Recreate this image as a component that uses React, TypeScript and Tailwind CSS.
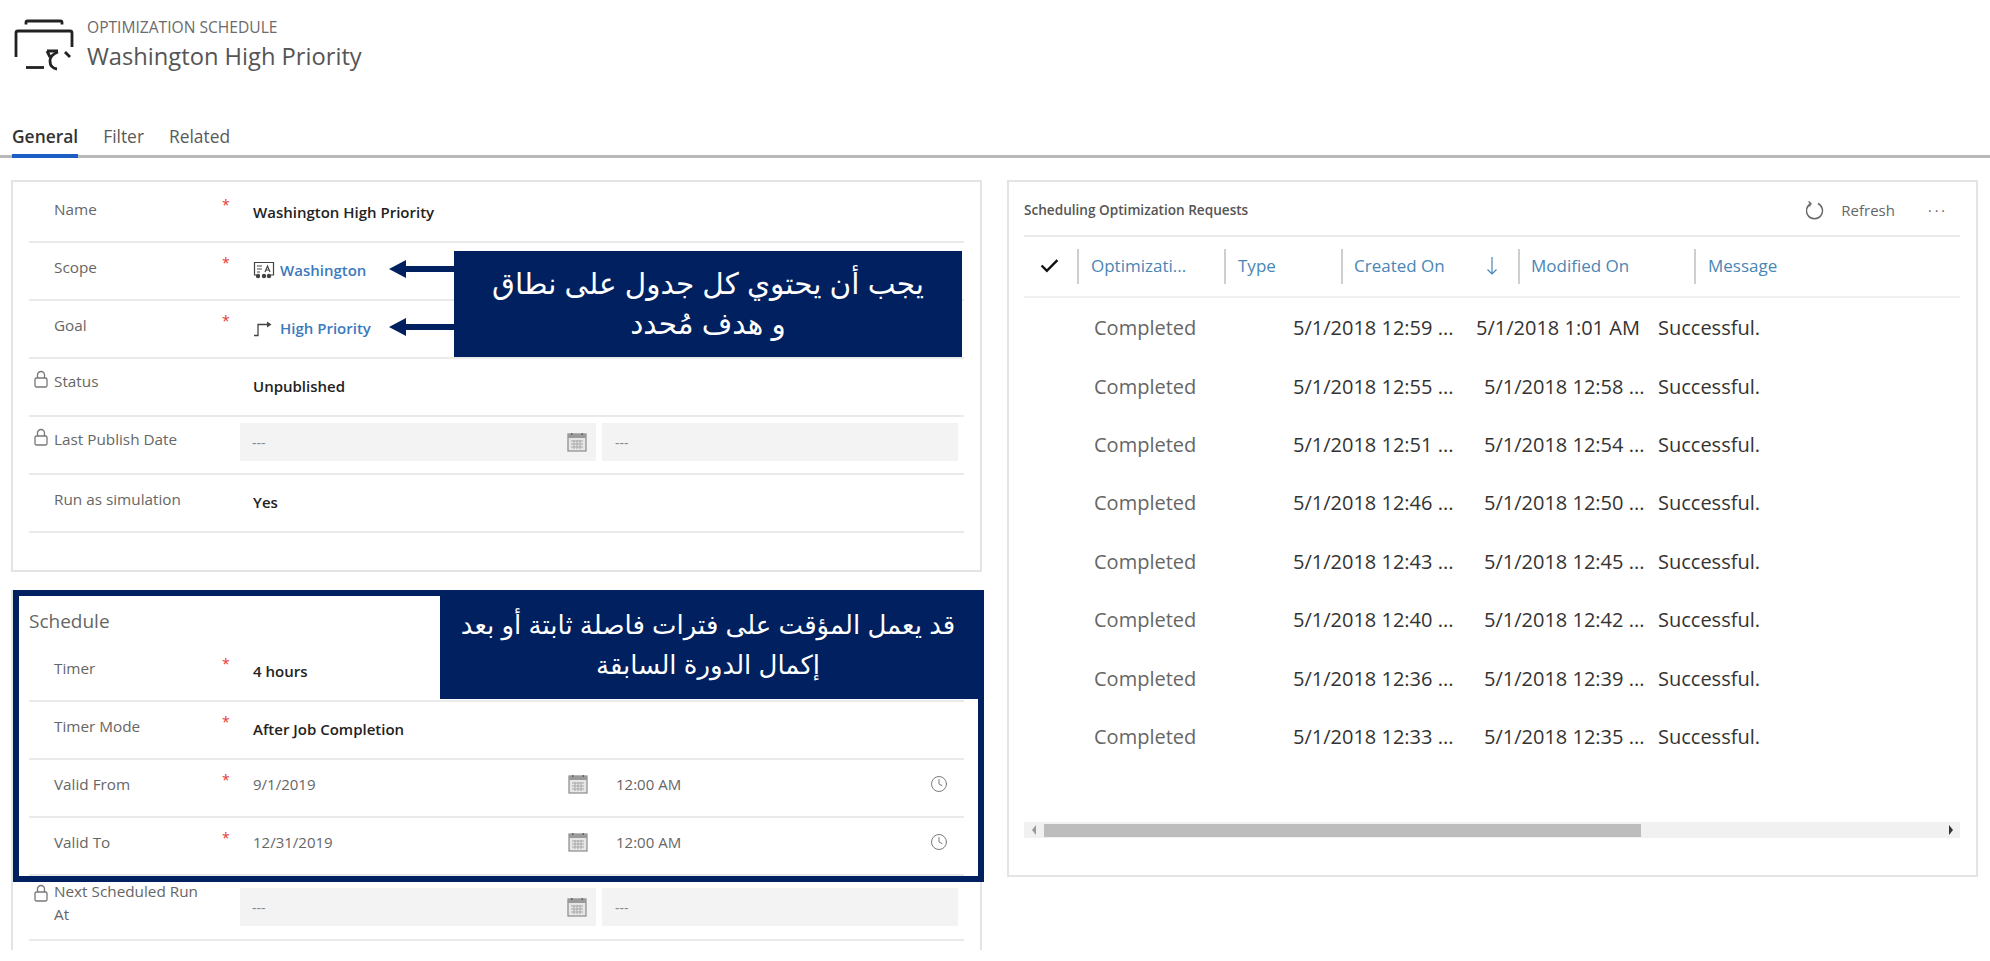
import React from 'react';
import { Clock } from 'lucide-react';

const uiFont = { fontFamily: '"Open Sans", "Noto Sans", sans-serif' };
const calloutFont = { fontFamily: '"Liberation Sans", "Noto Sans", "DejaVu Sans", sans-serif' };

const requests = [
  { created: '5/1/2018 12:59 ...', modified: '5/1/2018 1:01 AM' },
  { created: '5/1/2018 12:55 ...', modified: '5/1/2018 12:58 ...' },
  { created: '5/1/2018 12:51 ...', modified: '5/1/2018 12:54 ...' },
  { created: '5/1/2018 12:46 ...', modified: '5/1/2018 12:50 ...' },
  { created: '5/1/2018 12:43 ...', modified: '5/1/2018 12:45 ...' },
  { created: '5/1/2018 12:40 ...', modified: '5/1/2018 12:42 ...' },
  { created: '5/1/2018 12:36 ...', modified: '5/1/2018 12:39 ...' },
  { created: '5/1/2018 12:33 ...', modified: '5/1/2018 12:35 ...' },
];

function LockIcon({ top }: { top: string }) {
  return (
    <svg width="14" height="18" viewBox="0 0 14 18" fill="none" stroke="#777" strokeWidth="1.3" className={`absolute left-[5px] ${top}`}>
      <rect x="1" y="8" width="12" height="9" rx="1.5" />
      <path d="M3.5 8V5a3.5 3.5 0 0 1 7 0v3" />
    </svg>
  );
}

function CalendarIcon() {
  return (
    <svg width="20" height="20" viewBox="0 0 20 20" className="shrink-0">
      <rect x="1" y="2" width="18" height="17" fill="#e6e6e6" stroke="#8a8a8a" strokeWidth="1.2" />
      <rect x="1" y="2" width="18" height="4" fill="#9a9a9a" />
      <rect x="4" y="1" width="1.5" height="2" fill="#666" />
      <rect x="14.5" y="1" width="1.5" height="2" fill="#666" />
      <path d="M4 9h12M4 12h12M4 15h12M7 8v9M10 8v9M13 8v9" stroke="#a8a8a8" strokeWidth="1" />
    </svg>
  );
}

function ScopeIcon() {
  return (
    <svg width="22" height="18" viewBox="0 0 22 18" fill="none" stroke="#444" strokeWidth="1.2" className="mr-[5px] shrink-0">
      <path d="M3 14H1.5V1.5h19V14H18" />
      <path d="M4 5h5M4 8h5M4 11h3" />
      <path d="M12 11l2.5-6 2.5 6M13 9h3" />
      <circle cx="5" cy="15" r="1.6" fill="#444" />
      <circle cx="11" cy="15" r="1.6" fill="#444" />
      <circle cx="16" cy="15" r="1.6" fill="#444" />
    </svg>
  );
}

function GoalIcon() {
  return (
    <svg width="20" height="18" viewBox="0 0 20 18" fill="none" stroke="#444" strokeWidth="1.3" className="mr-[7px] shrink-0">
      <path d="M1 16.5h4V5.5h9" />
      <path d="M14 2.5l4.5 3-4.5 3z" fill="#444" stroke="none" />
    </svg>
  );
}

function Row({ label, required, locked, wrap, h, children }: {
  label: string;
  required?: boolean;
  locked?: boolean;
  wrap?: boolean;
  h: string;
  children: React.ReactNode;
}) {
  let labelClass = 'pt-[14px] leading-[20px]';
  if (wrap) labelClass = 'pt-[4px] pr-[20px] leading-[23px]';
  else if (locked) labelClass = 'pt-[12px] leading-[20px]';

  return (
    <div className={`relative flex ${h} border-b-2 border-[#eaeaea]`}>
      {locked && <LockIcon top={wrap ? 'top-[8px]' : 'top-[11px]'} />}
      <div className={`w-[193px] pl-[25px] text-[15.3px] text-[#666] ${labelClass}`}>{label}</div>
      <div className="w-[33px] pt-[10px] text-[14px] leading-[20px] text-[#e53935]">{required ? '*' : ''}</div>
      <div className="flex-1">{children}</div>
    </div>
  );
}

function Value({ children }: { children: React.ReactNode }) {
  return <div className="-ml-[2px] pt-[17px] text-[15px] leading-[20px] font-semibold text-[#222]">{children}</div>;
}

function LinkValue({ icon, children }: { icon: React.ReactNode; children: React.ReactNode }) {
  return (
    <div className="-ml-[2px] flex items-center pt-[17px] text-[15px] leading-[20px] font-semibold text-[#3b7abd]">
      {icon}
      {children}
    </div>
  );
}

function LockedDate() {
  return (
    <div className="-ml-[15px] flex gap-[6px] pt-[6px] text-[14px] text-[#888]">
      <div className="flex h-[38px] w-[356px] items-center justify-between bg-[#f3f3f3] pr-[9px] pl-[12px]">
        <span>---</span>
        <CalendarIcon />
      </div>
      <div className="flex h-[38px] w-[356px] items-center bg-[#f3f3f3] pl-[13px]">---</div>
    </div>
  );
}

function DateTime({ date }: { date: string }) {
  return (
    <div className="-ml-[2px] flex pt-[12px] text-[15px] leading-[24px] text-[#666]">
      <div className="flex w-[345px] items-center justify-between pr-[10px]">
        <span>{date}</span>
        <CalendarIcon />
      </div>
      <div className="flex w-[350px] items-center justify-between pl-[18px]">
        <span>12:00 AM</span>
        <Clock size={18} strokeWidth={1.3} color="#777" />
      </div>
    </div>
  );
}

function Arrow({ top }: { top: string }) {
  return (
    <div className={`absolute left-[376px] flex items-center ${top}`}>
      <div className="h-0 w-0 border-y-[9px] border-r-[17px] border-y-transparent border-r-[#002060]" />
      <div className="h-[6px] w-[51px] bg-[#002060]" />
    </div>
  );
}

export default function App() {
  return (
    <div className="h-[961px] w-[1990px] overflow-hidden bg-white" style={uiFont}>
      <div className="flex h-[115px] pt-[18px] pl-[14px]">
        <svg width="60" height="54" viewBox="14 18 60 54" fill="none" stroke="#222" strokeWidth="2.8">
          <path d="M26 24.5V22.5q0-1.5 1.5-1.5h33q1.5 0 1.5 1.5v2" />
          <path d="M16 57V33q0-2 2-2h52q2 0 2 2v14" />
          <path d="M26 67.5h18" />
          <path d="M57 69q-7-1-7-8 0-6 8-9" />
          <path d="M47 51h11M50 57l-3-6" />
          <path d="M65 52l5 5" />
        </svg>
        <div className="-mt-[1px] pl-[13px]">
          <div className="text-[15.6px] leading-[20px] text-[#6b6b6b]">OPTIMIZATION SCHEDULE</div>
          <div className="pt-[3px] text-[23.7px] leading-[32px] text-[#555]">Washington High Priority</div>
        </div>
      </div>

      <div className="flex h-[43px] gap-[25px] border-b-[3px] border-[#b9b9b9] pl-[12px] text-[17.4px] leading-[43px] text-[#5a5a5a]">
        <div className="h-[43px] border-b-[4px] border-[#1c5fc4] font-semibold text-[#333]">General</div>
        <div>Filter</div>
        <div>Related</div>
      </div>

      <div className="flex gap-[25px] pt-[22px] pl-[11px]">
        <div className="w-[971px]">
          <div className="relative h-[392px] border-2 border-[#e4e4e4] px-[16px] pt-[3px]">
            <Row label="Name" required h="h-[58px]"><Value>Washington High Priority</Value></Row>
            <Row label="Scope" required h="h-[58px]"><LinkValue icon={<ScopeIcon />}>Washington</LinkValue></Row>
            <Row label="Goal" required h="h-[58px]"><LinkValue icon={<GoalIcon />}>High Priority</LinkValue></Row>
            <Row label="Status" locked h="h-[58px]"><Value>Unpublished</Value></Row>
            <Row label="Last Publish Date" locked h="h-[58px]"><LockedDate /></Row>
            <Row label="Run as simulation" h="h-[58px]"><Value>Yes</Value></Row>
            <Arrow top="top-[78px]" />
            <Arrow top="top-[136px]" />
            <div dir="rtl" className="absolute top-[69px] left-[441px] flex h-[106px] w-[508px] flex-col justify-center bg-[#002060] text-center text-[29.5px] leading-[40px] text-white" style={calloutFont}>
              <div>يجب أن يحتوي كل جدول على نطاق</div>
              <div>و هدف مُحدد</div>
            </div>
          </div>

          <div className="relative mt-[18px] h-[360px] border-x-2 border-[#e4e4e4] px-[16px] pt-[6px]">
            <div className="h-[48px] pt-[12px] text-[19px] leading-[26px] text-[#666]">Schedule</div>
            <Row label="Timer" required h="h-[58px]"><Value>4 hours</Value></Row>
            <Row label="Timer Mode" required h="h-[58px]"><Value>After Job Completion</Value></Row>
            <Row label="Valid From" required h="h-[58px]"><DateTime date="9/1/2019" /></Row>
            <Row label="Valid To" required h="h-[58px]"><DateTime date="12/31/2019" /></Row>
            <Row label="Next Scheduled Run At" locked wrap h="h-[65px]"><div className="pt-[6px]"><LockedDate /></div></Row>

            <div className="absolute top-0 -right-[4px] left-0 h-[292px] border-[6px] border-[#002060]" />
            <div dir="rtl" className="absolute top-0 -right-[4px] left-[427px] flex h-[109px] flex-col justify-center bg-[#002060] pr-[8px] text-center text-[26px] leading-[40px] text-white" style={calloutFont}>
              <div>قد يعمل المؤقت على فترات فاصلة ثابتة أو بعد</div>
              <div>إكمال الدورة السابقة</div>
            </div>
          </div>
        </div>

        <div className="flex h-[697px] w-[971px] flex-col border-2 border-[#e4e4e4] pr-[16px] pb-[37px] pl-[15px]">
          <div className="flex h-[55px] shrink-0 items-center border-b-2 border-[#eaeaea] pt-[3px]">
            <div className="text-[13.6px] font-semibold text-[#555]">Scheduling Optimization Requests</div>
            <div className="ml-auto flex items-center pr-[12px] text-[15px] text-[#666]">
              <svg width="18" height="20" viewBox="0 0 18 20" fill="none" stroke="#666" strokeWidth="1.4" className="mr-[17px]">
                <path d="M5 3.5a8 8 0 1 0 7 0" />
                <path d="M2.5 1.5L5 3.5 3.5 6.5" strokeWidth="1.2" />
              </svg>
              <span className="mr-[33px]">Refresh</span>
              <span className="text-[14px] tracking-[3px]">···</span>
            </div>
          </div>

          <div className="flex h-[61px] shrink-0 items-center border-b-2 border-[#f0f0f0] text-[17px] text-[#4a86b5]">
            <div className="flex w-[53px] justify-center pr-[3px] pb-[3px]">
              <svg width="19" height="15" viewBox="0 0 18 14" fill="none" stroke="#111" strokeWidth="2.3"><path d="M1.5 7l5 5L16.5 2" /></svg>
            </div>
            <div className="flex h-[35px] w-[147px] items-center border-l-2 border-[#cfcfcf] pl-[12px] pb-[2px]">Optimizati...</div>
            <div className="flex h-[35px] w-[117px] items-center border-l-2 border-[#cfcfcf] pl-[12px] pb-[2px]">Type</div>
            <div className="flex h-[35px] w-[177px] items-center border-l-2 border-[#cfcfcf] pl-[11px] pb-[2px]">
              <span>Created On</span>
              <svg width="12" height="20" viewBox="0 0 12 20" fill="none" stroke="#4a86b5" strokeWidth="1.2" className="ml-[41px]"><path d="M6 1v17M1.5 13.5L6 18l4.5-4.5" /></svg>
            </div>
            <div className="flex h-[35px] w-[176px] items-center border-l-2 border-[#cfcfcf] pl-[11px] pb-[2px]">Modified On</div>
            <div className="flex h-[35px] flex-1 items-center border-l-2 border-[#cfcfcf] pl-[12px] pb-[2px]">Message</div>
          </div>

          <div className="pt-[1px] text-[20px] text-[#333]">
            {requests.map((r, i) => (
              <div key={r.created} className="flex h-[58.4px] items-center whitespace-nowrap">
                <div className="w-[269px] pl-[70px] text-[#666]">Completed</div>
                <div className={i === 0 ? 'w-[183px]' : 'w-[191px]'}>{r.created}</div>
                <div className={i === 0 ? 'w-[182px]' : 'w-[174px]'}>{r.modified}</div>
                <div>Successful.</div>
              </div>
            ))}
          </div>

          <div className="mt-auto flex h-[16px] shrink-0 items-center justify-between bg-[#f1f1f1]">
            <div className="flex h-[13px] w-[20px] items-center justify-center">
              <div className="h-0 w-0 border-y-[5px] border-r-[4px] border-y-transparent border-r-[#999]" />
            </div>
            <div className="h-[13px] w-[597px] bg-[#bdbdbd]" />
            <div className="flex-1" />
            <div className="flex h-[13px] w-[19px] items-center justify-center">
              <div className="h-0 w-0 border-y-[5px] border-l-[4px] border-y-transparent border-l-[#333]" />
            </div>
          </div>
        </div>
      </div>
    </div>
  );
}
